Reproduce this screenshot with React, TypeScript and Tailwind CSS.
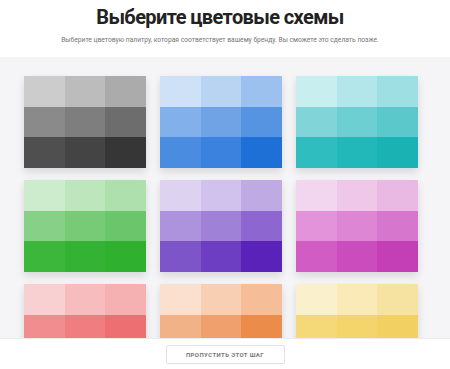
import React from "react";

const palettes: string[][] = [
  ["#cccccc", "#bcbcbc", "#ababab", "#8a8a8a", "#7e7e7e", "#6d6d6d", "#4f4f4f", "#444444", "#363636"],
  ["#cfe1f7", "#b9d3f3", "#9dc1ef", "#82b0ea", "#6fa3e6", "#5694e2", "#4a8ce0", "#3a82de", "#1e6fd6"],
  ["#c9eef0", "#b3e6ea", "#9ddfe3", "#81d4d8", "#6dcfd2", "#5bc8cc", "#2fbdbf", "#22b7b9", "#1bb2b3"],
  ["#cdeccd", "#bde6bd", "#aee0ae", "#86d187", "#77cb77", "#6bc66b", "#3cb73c", "#33b233", "#2fb02f"],
  ["#ddd3f1", "#d0c2ec", "#bfaae4", "#ad93de", "#9f81d7", "#8d67cf", "#7e55c9", "#6e3ec2", "#5a22b8"],
  ["#f2d5ee", "#eec7e9", "#e9b8e3", "#e293d9", "#dd86d4", "#d676cc", "#d05cc4", "#ca4cbd", "#c43eb6"],
  ["#f9d0d1", "#f7bdbe", "#f5b0b1", "#f28d8f", "#f07e80", "#ee6f72", "#ea5d60", "#e84f52", "#e54145"],
  ["#fbe0d0", "#f8cfb3", "#f5bd98", "#f2b287", "#efa06c", "#ec8c4b", "#e97b33", "#e76e22", "#e46113"],
  ["#fbf0cc", "#f9eab8", "#f6e2a1", "#f5d978", "#f3d56c", "#f2d162", "#f0c94a", "#eec53d", "#ecc030"],
];

function Card({ colors }: { colors: string[] }) {
  return (
    <div className="grid h-[92px] w-[122px] grid-cols-3 grid-rows-3 shadow-[0_4px_8px_rgba(0,0,0,0.12)]">
      {colors.map((c, i) => (
        <div key={i} style={{ backgroundColor: c }} />
      ))}
    </div>
  );
}

export default function App() {
  return (
    <div
      className="relative h-[369px] w-[450px] overflow-hidden bg-[#f5f5f7]"
      style={{ fontFamily: "Roboto, 'Noto Sans', sans-serif" }}
    >
      <div className="flex h-[57px] flex-col items-center bg-white pr-[10px] pt-[5px]">
        <h1 className="text-[20px] font-bold leading-[24px] tracking-[-0.6px] text-[#222222]">
          Выберите цветовые схемы
        </h1>
        <p className="mt-[7px] text-[6.7px] leading-[9px] text-[#777777]">
          Выберите цветовую палитру, которая соответствует вашему бренду. Вы сможете это сделать позже.
        </p>
      </div>
      <div className="grid grid-cols-[122px_122px_122px] gap-x-[14px] gap-y-[12px] pl-[24px] pt-[19px]">
        {palettes.map((p, i) => (
          <Card key={i} colors={p} />
        ))}
      </div>
      <div className="absolute bottom-0 left-0 flex h-[31px] w-full items-center justify-center border-t border-[#ececec] bg-white">
        <button className="flex h-[19px] w-[119px] items-center justify-center rounded-[2px] border border-[#e2e2e2] bg-white text-[6px] font-bold tracking-[0.4px] text-[#777777]">
          ПРОПУСТИТЬ ЭТОТ ШАГ
        </button>
      </div>
    </div>
  );
}
